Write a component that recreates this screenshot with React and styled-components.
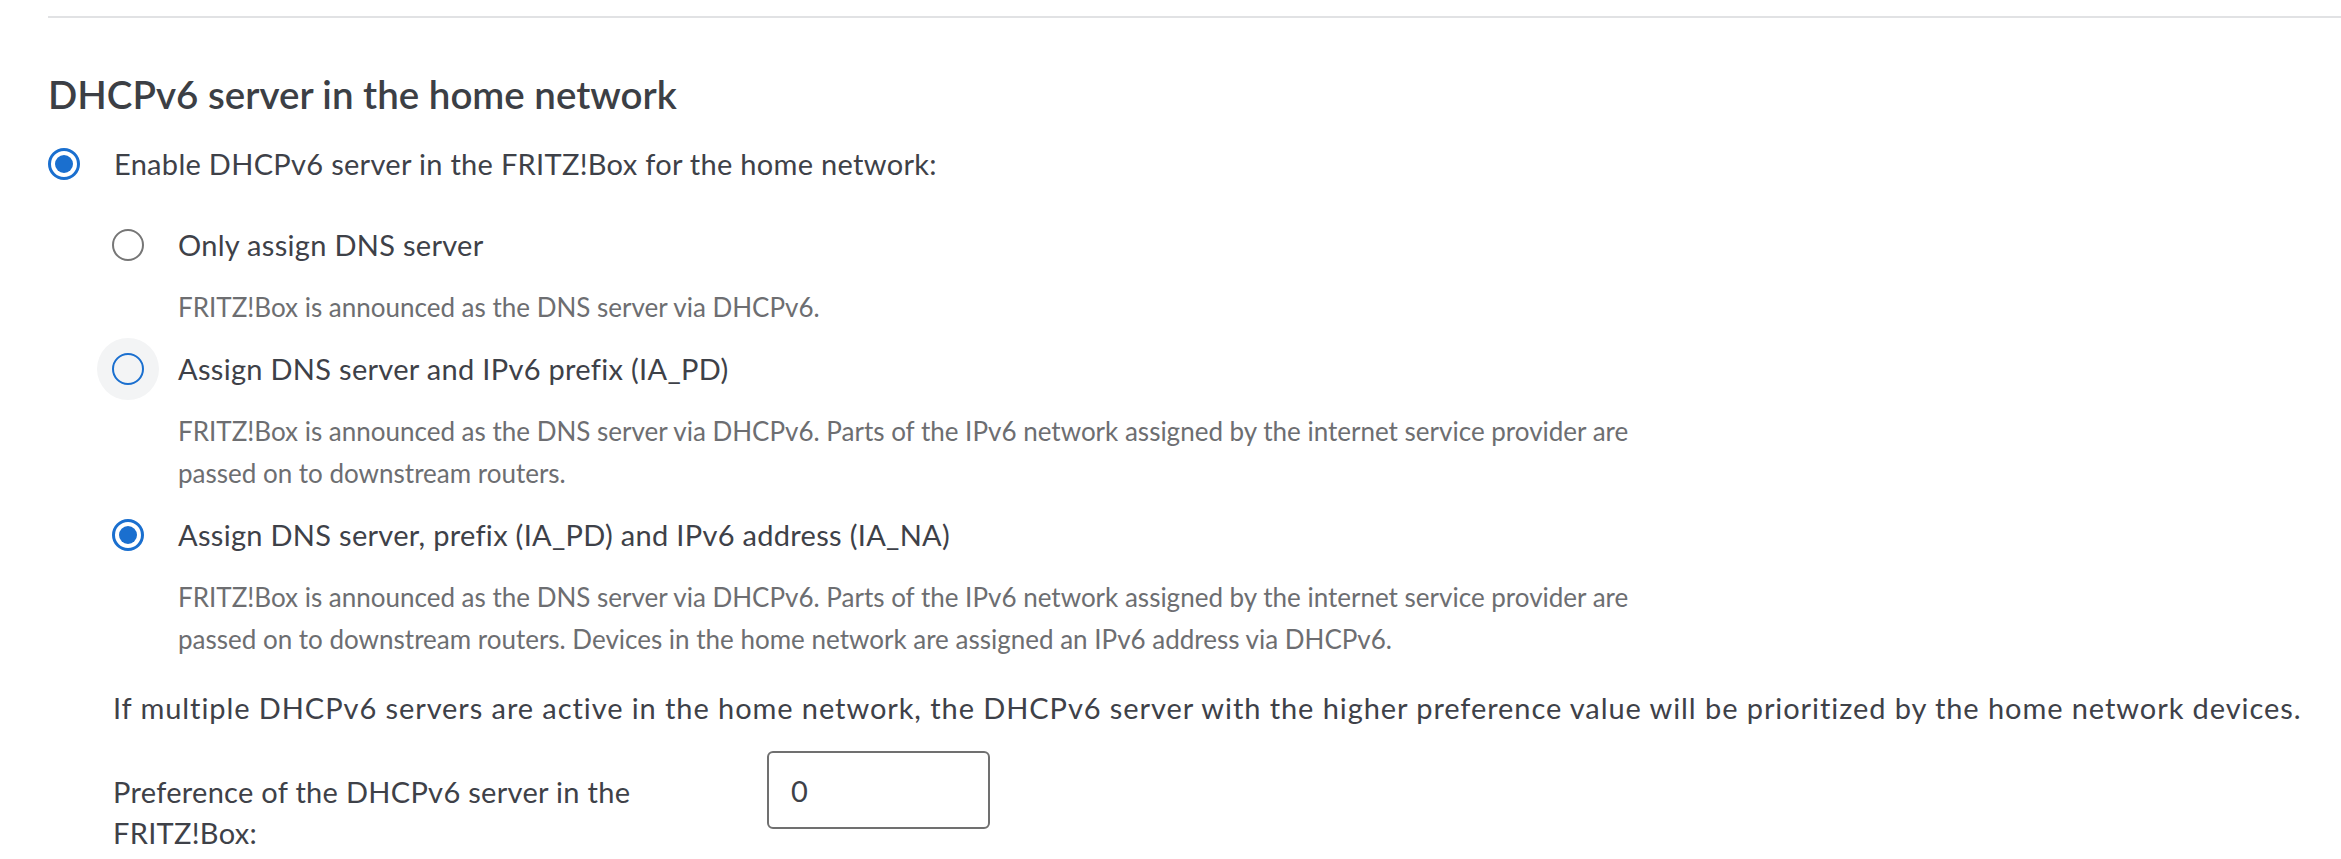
import styled, { createGlobalStyle } from "styled-components";

const GlobalStyle = createGlobalStyle`
  body {
    margin: 0;
    background: #ffffff;
    font-family: Lato, "Liberation Sans", sans-serif;
    color: #3e4148;
  }
`;

const Page = styled.div`
  padding: 16px 0 0 48px;
`;

const Divider = styled.div`
  height: 2px;
  background: #e1e2e4;
`;

const Heading = styled.h2`
  margin: 52px 0 26px;
  font-size: 38.5px;
  line-height: 48px;
  font-weight: 600;
  color: #3c3f45;
`;

const OptionRow = styled.label`
  display: flex;
  align-items: center;
  gap: 34px;
  font-size: 29px;
  letter-spacing: 0.3px;
  line-height: 40px;
  color: #3e4148;
`;

const Radio = styled.input.attrs({ type: "radio" })`
  appearance: none;
  margin: 0;
  flex: none;
  width: 32px;
  height: 32px;
  border-radius: 50%;
  border: 2px solid ${(p) => (p.$focus ? "#1a6fcf" : "#767676")};
  background: ${(p) => (p.$focus ? "#f3f4f5" : "#ffffff")};
  box-shadow: ${(p) => (p.$focus ? "0 0 0 15px #f3f4f5" : "none")};
  display: grid;
  place-items: center;

  &:checked {
    border: 3px solid #1a6fcf;
  }

  &:checked::after {
    content: "";
    width: 18px;
    height: 18px;
    border-radius: 50%;
    background: #1a6fcf;
  }
`;

const SubOptions = styled.div`
  padding: 41px 0 0 64px;
  display: flex;
  flex-direction: column;
`;

const Option = styled.div`
  margin-bottom: 21px;
`;

const Description = styled.p`
  margin: 21px 0 0 66px;
  max-width: 1500px;
  font-size: 26px;
  line-height: 42px;
  color: #6d6e71;
`;

const Note = styled.p`
  margin: 7px 0 0 65px;
  font-size: 29px;
  letter-spacing: 0.92px;
  line-height: 40px;
  color: #3e4148;
`;

const FieldRow = styled.div`
  display: grid;
  grid-template-columns: 654px 223px;
  align-items: start;
  margin: 23px 0 0 65px;
`;

const FieldLabel = styled.label`
  padding-top: 20px;
  max-width: 580px;
  font-size: 29px;
  letter-spacing: 0.3px;
  line-height: 41px;
  color: #3e4148;
`;

const TextInput = styled.input`
  box-sizing: border-box;
  width: 223px;
  height: 78px;
  padding: 0 22px;
  border: 2px solid #707070;
  border-radius: 6px;
  font-family: Lato, "Liberation Sans", sans-serif;
  font-size: 29px;
  color: #3e4148;
  outline: none;
`;

const options = [
  {
    id: "dns",
    label: "Only assign DNS server",
    text: ["FRITZ!Box is announced as the DNS server via DHCPv6."],
  },
  {
    id: "pd",
    label: "Assign DNS server and IPv6 prefix (IA_PD)",
    focus: true,
    text: [
      "FRITZ!Box is announced as the DNS server via DHCPv6. Parts of the IPv6 network assigned by the internet service provider are",
      "passed on to downstream routers.",
    ],
  },
  {
    id: "na",
    label: "Assign DNS server, prefix (IA_PD) and IPv6 address (IA_NA)",
    checked: true,
    text: [
      "FRITZ!Box is announced as the DNS server via DHCPv6. Parts of the IPv6 network assigned by the internet service provider are",
      "passed on to downstream routers. Devices in the home network are assigned an IPv6 address via DHCPv6.",
    ],
  },
];

const App = () => {
  return (
    <Page>
      <GlobalStyle />
      <Divider />
      <Heading>DHCPv6 server in the home network</Heading>
      <OptionRow>
        <Radio name="dhcp" defaultChecked />
        Enable DHCPv6 server in the FRITZ!Box for the home network:
      </OptionRow>
      <SubOptions>
        {options.map((o) => (
          <Option key={o.id}>
            <OptionRow>
              <Radio name="mode" $focus={o.focus} defaultChecked={o.checked} />
              {o.label}
            </OptionRow>
            <Description>
              {o.text.map((line, i) => (
                <span key={i}>
                  {line}
                  {i < o.text.length - 1 && <br />}
                </span>
              ))}
            </Description>
          </Option>
        ))}
      </SubOptions>
      <Note>
        If multiple DHCPv6 servers are active in the home network, the DHCPv6
        server with the higher preference value will be prioritized by the home
        network devices.
      </Note>
      <FieldRow>
        <FieldLabel htmlFor="pref">
          Preference of the DHCPv6 server in the FRITZ!Box:
        </FieldLabel>
        <TextInput id="pref" defaultValue="0" />
      </FieldRow>
    </Page>
  );
};

export default App;
